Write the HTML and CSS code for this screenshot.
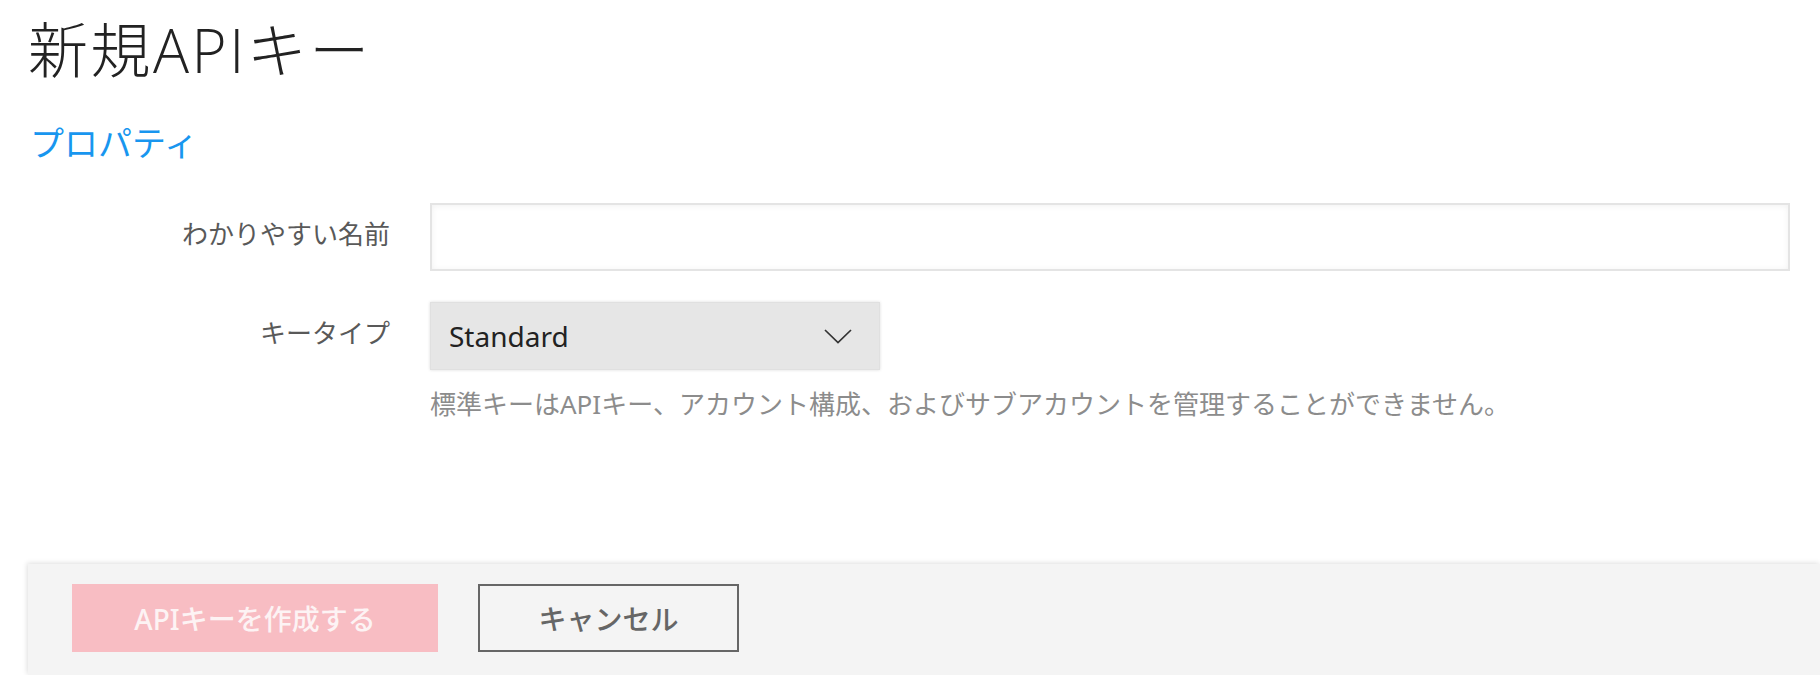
FILE: index.html
```html
<!DOCTYPE html>
<html lang="ja">
<head>
<meta charset="utf-8">
<title>新規APIキー</title>
<link rel="stylesheet" href="styles.css">
</head>
<body>
<main class="page">
  <h1 class="title">新規APIキー</h1>
  <h2 class="section">プロパティ</h2>
  <div class="form">
    <label class="label label-first">わかりやすい名前</label>
    <div class="field">
      <div class="input"></div>
    </div>
    <label class="label">キータイプ</label>
    <div class="field">
      <div class="select">
        <span class="select-value">Standard</span>
        <svg class="chevron" width="28" height="15" viewBox="0 0 28 15" aria-hidden="true">
          <polyline points="1,1 14,13.6 27,1" fill="none" stroke="#333" stroke-width="1.7"/>
        </svg>
      </div>
      <p class="help">標準キーはAPIキー、アカウント構成、およびサブアカウントを管理することができません。</p>
    </div>
  </div>
</main>
<footer class="footer">
  <button class="btn btn-primary" type="button">APIキーを作成する</button>
  <button class="btn btn-secondary" type="button">キャンセル</button>
</footer>
</body>
</html>
```
FILE: styles.css
```css
html, body {
  margin: 0;
  padding: 0;
  background: #ffffff;
}

body {
  font-family: "Noto Sans", "Noto Sans CJK JP", sans-serif;
  color: #222;
}

.page {
  padding: 14px 30px 0 28px;
}

.title {
  margin: 0;
  font-family: "Open Sans", "Noto Sans CJK JP", sans-serif;
  font-size: 60px;
  line-height: 72px;
  font-weight: 300;
  color: #222;
  letter-spacing: 2.5px;
}

.section {
  margin: 35px 0 0 2px;
  font-size: 34px;
  line-height: 44px;
  font-weight: 400;
  color: #1896ef;
}

.form {
  margin-top: 38px;
  display: grid;
  grid-template-columns: 363px 1fr;
  column-gap: 39px;
  row-gap: 31px;
}

.label {
  text-align: right;
  font-size: 26px;
  line-height: 62px;
  color: #595959;
  padding-right: 1px;
}

.field {
  min-width: 0;
}

.input {
  box-sizing: border-box;
  height: 68px;
  border: 2px solid #e4e4e4;
  background: #fff;
  box-shadow: inset 0 1px 6px rgba(0, 0, 0, 0.06);
}

.select {
  box-sizing: border-box;
  width: 450px;
  height: 68px;
  display: flex;
  align-items: center;
  justify-content: space-between;
  padding: 0 27px 0 18px;
  background: #e6e6e6;
  border: 1px solid #e0e0e0;
  box-shadow: 0 0 3px rgba(0, 0, 0, 0.14);
}

.select-value {
  font-size: 28px;
  line-height: 66px;
  color: #222;
}

.chevron {
  display: block;
}

.help {
  margin: 16px 0 0;
  font-size: 26px;
  line-height: 36px;
  color: #8c8c8c;
  white-space: nowrap;
}

.footer {
  margin: 142px 0 0 28px;
  padding: 20px 0 23px 44px;
  background: #f4f4f4;
  box-shadow: -1px -1px 5px rgba(0, 0, 0, 0.13);
  display: flex;
  gap: 40px;
}

.btn {
  box-sizing: border-box;
  height: 68px;
  margin: 0;
  font-family: "Noto Sans", "Noto Sans CJK JP", sans-serif;
  font-size: 28px;
  font-weight: 500;
  cursor: pointer;
}

.btn-primary {
  width: 366px;
  border: none;
  background: #f8bdc3;
  color: #fdf3f4;
}

.btn-secondary {
  width: 261px;
  border: 2px solid #666;
  background: transparent;
  color: #666;
}
```
